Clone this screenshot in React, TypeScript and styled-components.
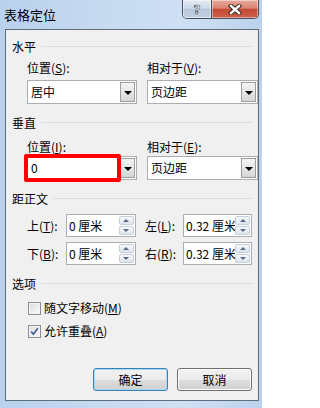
import styled, { createGlobalStyle } from "styled-components";

const GlobalStyle = createGlobalStyle`
  html, body {
    margin: 0;
    padding: 0;
  }
  body {
    width: 262px;
    height: 408px;
    overflow: hidden;
    font-family: "Noto Sans CJK SC", "Microsoft YaHei", sans-serif;
    font-size: 12px;
    color: #000;
  }
  u {
    text-underline-offset: 1px;
  }
`;

const Frame = styled.div`
  width: 262px;
  height: 408px;
  box-sizing: border-box;
  display: flex;
  flex-direction: column;
  padding: 0 3px 7px 5px;
  background: linear-gradient(90deg, #b9d1ec 0%, #c8dbf1 45%, #cfe0f4 70%, #bcd2ec 100%);
`;

const TitleBar = styled.div`
  height: 29px;
  flex: none;
  display: flex;
  align-items: flex-start;
`;

const Title = styled.div`
  flex: 1;
  margin-top: 6px;
  margin-left: -1px;
  font-size: 13px;
  line-height: 18px;
`;

const Caption = styled.div`
  display: flex;
  height: 19px;
  box-sizing: border-box;
  border: 1px solid #44505e;
  border-top: none;
  border-radius: 0 0 5px 5px;
  overflow: hidden;
`;

const CaptionButton = styled.div<{ $close?: boolean }>`
  width: ${(p) => (p.$close ? 46 : 28)}px;
  display: flex;
  align-items: center;
  justify-content: center;
  box-shadow: inset 0 0 0 1px rgba(255, 255, 255, 0.45);
  background: ${(p) =>
    p.$close
      ? "linear-gradient(180deg, #e9a99c 0%, #d98472 45%, #c44a34 52%, #cf604a 100%)"
      : "linear-gradient(180deg, #e3ebf4 0%, #cfdbe8 45%, #b7c7d9 52%, #c3d2e3 100%)"};
  border-left: ${(p) => (p.$close ? "1px solid #44505e" : "none")};
`;

const HelpGlyph = styled.span`
  font-family: "DejaVu Sans", sans-serif;
  font-weight: bold;
  font-size: 12px;
  line-height: 12px;
  color: #fff;
  -webkit-text-stroke: 0.6px #3a4654;
  margin-top: 1px;
`;

const Client = styled.div`
  flex: 1;
  box-sizing: border-box;
  border: 1px solid #5f6d7b;
  background: #f0f0f0;
  display: flex;
  flex-direction: column;
  padding: 0 6px 9px 6px;
`;

const Legend = styled.div<{ $top: number }>`
  display: flex;
  align-items: center;
  height: 16px;
  line-height: 16px;
  margin-top: ${(p) => p.$top}px;
  &::after {
    content: "";
    flex: 1;
    height: 1px;
    margin-left: 5px;
    margin-top: -1px;
    background: #d5dfe5;
  }
`;

const Body = styled.div<{ $top: number }>`
  padding-left: 15px;
  margin-top: ${(p) => p.$top}px;
`;

const Pair = styled.div`
  display: grid;
  grid-template-columns: 110px 111px;
  column-gap: 10px;
`;

const Label = styled.div`
  height: 16px;
  line-height: 16px;
  white-space: nowrap;
`;

const Combo = styled.div`
  position: relative;
  display: flex;
  height: 24px;
  box-sizing: border-box;
  border: 1px solid #abadb3;
  background: #fff;
`;

const ComboText = styled.div`
  flex: 1;
  padding-left: 3px;
  line-height: 22px;
`;

const ComboButton = styled.div`
  width: 15px;
  margin: 1px;
  box-sizing: border-box;
  border: 1px solid #9c9c9c;
  background: linear-gradient(180deg, #f4f4f4 0%, #e6e6e6 50%, #d6d6d6 100%);
  display: flex;
  align-items: center;
  justify-content: center;
  &::before {
    content: "";
    border-left: 4px solid transparent;
    border-right: 4px solid transparent;
    border-top: 4px solid #000;
    margin-top: 1px;
  }
`;

const Highlight = styled.div`
  position: absolute;
  left: -4px;
  top: -3px;
  width: 97px;
  height: 28px;
  box-sizing: border-box;
  border: 4px solid #ff0000;
  border-radius: 2px;
  pointer-events: none;
`;

const SpinRow = styled.div<{ $top: number }>`
  display: flex;
  align-items: center;
  margin-top: ${(p) => p.$top}px;
`;

const SpinLabel = styled.div<{ $width: number; $gap?: number }>`
  width: ${(p) => p.$width}px;
  margin-left: ${(p) => p.$gap ?? 0}px;
  line-height: 16px;
  white-space: nowrap;
`;

const Spin = styled.div<{ $width: number }>`
  width: ${(p) => p.$width}px;
  height: 23px;
  box-sizing: border-box;
  border: 1px solid #abadb3;
  background: #fff;
  display: flex;
  overflow: hidden;
`;

const SpinText = styled.div`
  flex: 1;
  padding-left: 2px;
  line-height: 21px;
  white-space: nowrap;
  overflow: hidden;
`;

const SpinButtons = styled.div`
  width: 15px;
  flex: none;
  margin: 1px 1px 1px 0;
  display: flex;
  flex-direction: column;
  gap: 1px;
`;

const SpinButton = styled.div<{ $down?: boolean }>`
  flex: 1;
  border: 1px solid #c5cfdb;
  border-radius: 2px;
  background: linear-gradient(180deg, #f7f9fc 0%, #e9eef5 55%, #dde4ee 100%);
  display: flex;
  align-items: center;
  justify-content: center;
  &::before {
    content: "";
    border-left: 3px solid transparent;
    border-right: 3px solid transparent;
    ${(p) =>
      p.$down ? "border-top: 3px solid #56698a;" : "border-bottom: 3px solid #56698a;"}
  }
`;

const CheckRow = styled.label<{ $top: number }>`
  display: flex;
  align-items: center;
  height: 16px;
  margin-top: ${(p) => p.$top}px;
  padding-left: 16px;
  line-height: 16px;
`;

const Box = styled.span`
  width: 13px;
  height: 13px;
  box-sizing: border-box;
  border: 1px solid #8f8f8f;
  background: linear-gradient(135deg, #dcdcdc 0%, #f2f2f2 70%, #fbfbfb 100%);
  box-shadow: inset 0 0 0 1px #f4f4f4;
  margin-right: 3px;
  display: flex;
  align-items: center;
  justify-content: center;
`;

const Buttons = styled.div`
  margin-top: auto;
  display: flex;
  justify-content: flex-end;
  gap: 9px;
  padding-right: 0;
`;

const Button = styled.div<{ $default?: boolean }>`
  width: 75px;
  height: 23px;
  box-sizing: border-box;
  border: 1px solid ${(p) => (p.$default ? "#3c7fb1" : "#707070")};
  border-radius: 3px;
  background: linear-gradient(180deg, #f2f2f2 0%, #ebebeb 50%, #dddddd 51%, #cfcfcf 100%);
  box-shadow: inset 0 0 0 1px ${(p) => (p.$default ? "#9fdcf7" : "#fcfcfc")};
  display: flex;
  align-items: center;
  justify-content: center;
  line-height: 16px;
`;

function CloseIcon() {
  return (
    <svg width="16" height="11" viewBox="0 0 16 11">
      <path d="M4 2 L12 9 M12 2 L4 9" stroke="#3a2a28" strokeWidth="4.4" strokeLinecap="square" />
      <path d="M4 2 L12 9 M12 2 L4 9" stroke="#fff" strokeWidth="2.4" strokeLinecap="square" />
    </svg>
  );
}

function Tick() {
  return (
    <svg width="9" height="9" viewBox="0 0 9 9">
      <path d="M1.2 4.6 L3.4 7.2 L7.8 1.2" fill="none" stroke="#4a5e96" strokeWidth="1.7" />
    </svg>
  );
}

function SpinField({ value }: { value: string }) {
  return (
    <>
      <SpinText>{value}</SpinText>
      <SpinButtons>
        <SpinButton />
        <SpinButton $down />
      </SpinButtons>
    </>
  );
}

export default function App() {
  return (
    <>
      <GlobalStyle />
      <Frame>
        <TitleBar>
          <Title>表格定位</Title>
          <Caption>
            <CaptionButton>
              <HelpGlyph>?</HelpGlyph>
            </CaptionButton>
            <CaptionButton $close>
              <CloseIcon />
            </CaptionButton>
          </Caption>
        </TitleBar>
        <Client>
          <Legend $top={9}>水平</Legend>
          <Body $top={5}>
            <Pair>
              <Label>
                位置(<u>S</u>):
              </Label>
              <Label>
                相对于(<u>V</u>):
              </Label>
            </Pair>
            <Pair style={{ marginTop: 4 }}>
              <Combo>
                <ComboText>居中</ComboText>
                <ComboButton />
              </Combo>
              <Combo>
                <ComboText>页边距</ComboText>
                <ComboButton />
              </Combo>
            </Pair>
          </Body>

          <Legend $top={11}>垂直</Legend>
          <Body $top={8}>
            <Pair>
              <Label>
                位置(<u>I</u>):
              </Label>
              <Label>
                相对于(<u>E</u>):
              </Label>
            </Pair>
            <Pair style={{ marginTop: 1 }}>
              <Combo>
                <ComboText>0</ComboText>
                <ComboButton />
                <Highlight />
              </Combo>
              <Combo>
                <ComboText>页边距</ComboText>
                <ComboButton />
              </Combo>
            </Pair>
          </Body>

          <Legend $top={11}>距正文</Legend>
          <Body $top={7}>
            <SpinRow $top={0}>
              <SpinLabel $width={40}>
                上(<u>T</u>):
              </SpinLabel>
              <Spin $width={72}>
                <SpinField value="0 厘米" />
              </Spin>
              <SpinLabel $width={39} $gap={9}>
                左(<u>L</u>):
              </SpinLabel>
              <Spin $width={71}>
                <SpinField value="0.32 厘米" />
              </Spin>
            </SpinRow>
            <SpinRow $top={5}>
              <SpinLabel $width={40}>
                下(<u>B</u>):
              </SpinLabel>
              <Spin $width={72}>
                <SpinField value="0 厘米" />
              </Spin>
              <SpinLabel $width={39} $gap={9}>
                右(<u>R</u>):
              </SpinLabel>
              <Spin $width={71}>
                <SpinField value="0.32 厘米" />
              </Spin>
            </SpinRow>
          </Body>

          <Legend $top={11}>选项</Legend>
          <CheckRow $top={8}>
            <Box />
            随文字移动(<u>M</u>)
          </CheckRow>
          <CheckRow $top={7}>
            <Box>
              <Tick />
            </Box>
            允许重叠(<u>A</u>)
          </CheckRow>

          <Buttons>
            <Button $default>确定</Button>
            <Button>取消</Button>
          </Buttons>
        </Client>
      </Frame>
    </>
  );
}
